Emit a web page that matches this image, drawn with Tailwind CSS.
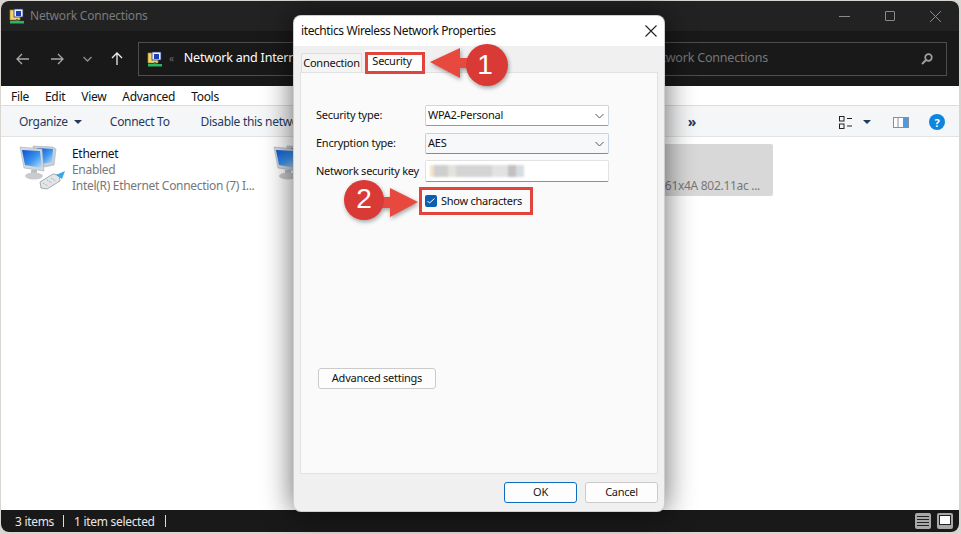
<!DOCTYPE html>
<html><head><meta charset="utf-8"><script src="https://cdn.jsdelivr.net/npm/@tailwindcss/browser@4"></script></head>
<body class="bg-[#d9d6d2] overflow-hidden">
<div class="relative w-[961px] h-[534px] overflow-hidden font-['Noto_Sans',sans-serif] text-[12px] tracking-[-0.3px] text-[#1a1a1a]">
  <svg width="0" height="0" class="absolute"><defs>
    <linearGradient id="scr" x1="0" y1="0" x2="1" y2="1"><stop offset="0" stop-color="#0d4fd0"/><stop offset=".55" stop-color="#3d96ee"/><stop offset="1" stop-color="#bfe3fb"/></linearGradient>
    <g id="folder"><path d="M1 2h6l1 1h3v9H1z" fill="#f2d46a" stroke="#a98b2c" stroke-width=".7"/><rect x="5" y="1" width="9" height="8" fill="#eef3fb" stroke="#24357f" stroke-width=".8"/><rect x="7" y="3" width="5" height="5" fill="#1f3fb5"/><rect x="7" y="11" width="2" height="2.5" fill="#3a7a4a"/><rect x="1" y="13" width="14" height="2.5" fill="#29b765"/></g>
    <g id="net"><path d="M14 2l20 1 3 2-2 16-10 2-9-8z" fill="#c9d0d6" stroke="#9aa2a8" stroke-width=".5"/><path d="M18 4l16 1-1 13-10 2z" fill="url(#scr)"/><path d="M1 3l22 2 2 22-20-3z" fill="#d3d8dc" stroke="#9aa2a8" stroke-width=".5"/><path d="M3 6l18 1 2 17-17-3z" fill="url(#scr)"/><rect x="12" y="26" width="6" height="4" fill="#b9bec3"/><ellipse cx="15" cy="32" rx="9" ry="3.5" fill="#c8ccd0"/></g>
    <g id="plug"><path d="M21 38l13-8 6 1 1 6-13 8-6-1z" fill="#e2e6e9" stroke="#828a8f" stroke-width=".7"/><path d="M24 39l5 3M28 36l5 3M32 34l5 3" stroke="#7c8488" stroke-width=".7" fill="none" stroke-dasharray="1 1"/><path d="M37 31l9-4-3 8z" fill="#35a9e8"/></g>
  </defs></svg>

  <div class="ml-px mt-px w-[958px] h-[531px] rounded-lg overflow-hidden flex flex-col bg-white">
    <div class="h-[30px] shrink-0 bg-[#222222] flex items-center pl-[8px] pr-[18px] text-[#7b7b7b]">
      <svg width="16" height="16" viewBox="0 0 16 16"><use href="#folder"/></svg>
      <span class="ml-[5px] tracking-[-0.2px]">Network Connections</span>
      <div class="ml-auto flex items-center gap-[35px]">
        <div class="w-[11px] h-px bg-[#8a8a8a]"></div>
        <div class="w-[10px] h-[10px] border border-[#8a8a8a] rounded-[1px]"></div>
        <svg width="11" height="11" viewBox="0 0 11 11" stroke="#8a8a8a"><path d="M0 0l11 11M11 0L0 11"/></svg>
      </div>
    </div>
    <div class="h-[55px] shrink-0 bg-[#191919] flex items-center pl-[15px] pr-[12px]">
      <svg width="13" height="12" viewBox="0 0 13 12" fill="none" stroke="#a8a8a8" stroke-width="1.3"><path d="M13 6H1M6 1L1 6l5 5"/></svg>
      <svg class="ml-[22px]" width="13" height="12" viewBox="0 0 13 12" fill="none" stroke="#a8a8a8" stroke-width="1.3"><path d="M0 6h12M7 1l5 5-5 5"/></svg>
      <svg class="ml-[19px]" width="9" height="6" viewBox="0 0 9 6" fill="none" stroke="#8a8a8a" stroke-width="1.5"><path d="M.5 1l4 4 4-4"/></svg>
      <svg class="ml-[19px]" width="12" height="13" viewBox="0 0 12 13" fill="none" stroke="#eeeeee" stroke-width="1.3"><path d="M6 13V1M1 6l5-5 5 5"/></svg>
      <div class="ml-[15px] flex-1 h-[34px] border border-[#4e4e4e] flex items-center pl-[8px] pr-[13px]">
        <svg width="16" height="16" viewBox="0 0 16 16"><use href="#folder"/></svg>
        <span class="ml-[6px] text-[#666] text-[10px]">«</span>
        <span class="ml-[10px] text-white text-[12.5px] tracking-[-0.2px]">Network and Internet</span>
        <span class="ml-auto mr-[153px] text-[#777] text-[12.5px] tracking-[-0.2px]">Search Network Connections</span>
        <svg width="12" height="12" viewBox="0 0 12 12" fill="none" stroke="#a0a0a0" stroke-width="1.7"><circle cx="7.5" cy="4.5" r="3.3"/><path d="M5 7l-4 4" stroke-width="2"/></svg>
      </div>
    </div>
    <div class="h-[20px] shrink-0 bg-white flex items-center pl-[10px] pt-[2px] border-b border-[#dcdcdc] text-[#111]">
      <span>File</span><span class="ml-[16px]">Edit</span><span class="ml-[16px]">View</span><span class="ml-[16px]">Advanced</span><span class="ml-[16px]">Tools</span>
    </div>
    <div class="h-[31px] shrink-0 bg-[#f5f6f7] border-b border-[#e3e3e3] flex items-center pl-[18px] pr-[14px] pt-[2px] text-[#1e3a5f]">
      <span>Organize</span>
      <svg class="ml-[6px]" width="8" height="4" viewBox="0 0 8 4"><path d="M0 0h8L4 4z" fill="#1e3a5f"/></svg>
      <span class="ml-[28px]">Connect To</span>
      <span class="ml-[31px]">Disable this network device</span>
      <span class="ml-auto mr-[143px] text-[14px] font-bold text-[#1e3a5f] leading-none">»</span>
      <svg width="13" height="13" viewBox="0 0 13 13" fill="none" stroke="#222"><rect x=".5" y=".5" width="4.5" height="4.5"/><rect x=".5" y="8" width="4.5" height="4.5"/><path d="M8 2.5h5M8 10h5"/></svg>
      <svg class="ml-[11px]" width="8" height="4" viewBox="0 0 8 4"><path d="M0 0h8L4 4z" fill="#1e3a5f"/></svg>
      <svg class="ml-[22px]" width="16" height="11" viewBox="0 0 16 11"><rect x=".5" y=".5" width="15" height="10" fill="#fff" stroke="#8a8f94"/><rect x="10" y="1" width="5" height="9" fill="#4b9be2"/><path d="M5 1v9" stroke="#8a8f94"/></svg>
      <div class="ml-[20px] w-[16px] h-[16px] rounded-full bg-[#0f85dc] flex items-center justify-center text-white font-bold text-[11px] leading-none">?</div>
    </div>
    <div class="flex-1 bg-white flex items-start pt-[7px]">
      <div class="w-[253px] flex pl-[18px] shrink-0">
        <svg width="46" height="46" viewBox="0 0 46 46" class="shrink-0"><use href="#net"/><use href="#plug"/></svg>
        <div class="ml-[7px] leading-[16px] pt-[2px] whitespace-nowrap">
          <div class="text-[#111]">Ethernet</div><div class="text-[#777]">Enabled</div><div class="text-[#777]">Intel(R) Ethernet Connection (7) I...</div>
        </div>
      </div>
      <svg width="46" height="46" viewBox="0 0 46 46" class="shrink-0 ml-[19px]"><use href="#net"/></svg>
      <div class="ml-[274px] w-[180px] h-[52px] rounded-r-[2px] bg-[#d8d8d8] flex items-end justify-end pb-[2px] pr-[13px] text-[#777] whitespace-nowrap leading-[16px]">Qualcomm QCA61x4A 802.11ac ...</div>
    </div>
    <div class="h-[22px] shrink-0 bg-[#191919] text-[#e8e8e8] flex items-center pl-[14px] pr-[6px]">
      <span class="pt-[2px]">3 items</span><div class="ml-[9px] w-px h-[12px] bg-[#ddd]"></div>
      <span class="ml-[10px] pt-[2px]">1 item selected</span><div class="ml-[10px] w-px h-[12px] bg-[#ddd]"></div>
      <div class="ml-auto flex items-center gap-[6px]">
        <div class="w-[16px] h-[16px] rounded-[2px] bg-[#a9a9a9] flex flex-col justify-center gap-[2px] px-[2px]"><div class="h-px bg-[#222]"></div><div class="h-px bg-[#222]"></div><div class="h-px bg-[#222]"></div><div class="h-px bg-[#222]"></div></div>
        <div class="w-[16px] h-[16px] rounded-[2px] bg-[#a9a9a9] p-[2px] pb-[4px]"><div class="w-full h-full bg-white border border-[#222]"></div></div>
      </div>
    </div>
  </div>

  <!-- dialog -->
  <div class="absolute left-[293px] top-[15px] w-[372px] h-[497px] rounded-lg overflow-hidden bg-[#f0f0f0] shadow-[0_0_30px_rgba(0,0,0,0.6)] border border-[#9a9a9a]/40 flex flex-col text-[11px] tracking-[-0.25px] whitespace-nowrap">
    <div class="h-[30px] shrink-0 bg-white flex items-center pl-[7px] pr-[7px] text-[12px] tracking-[-0.4px] text-[#111]">
      <span>itechtics Wireless Network Properties</span>
      <svg class="ml-auto" width="12" height="12" viewBox="0 0 12 12" stroke="#222" stroke-width="1.1"><path d="M.5.5l11 11M11.5.5l-11 11"/></svg>
    </div>
    <div class="h-[26px] shrink-0 flex items-end pl-[7px]">
      <div class="w-[61px] h-[19px] bg-[#f4f4f4] border border-b-0 border-[#dcdcdc] rounded-t-[2px] flex items-center justify-center pt-[1px] text-[#111]">Connection</div>
      <div class="w-[60px] h-[22px] ml-[3px] bg-white flex items-center justify-center pr-[6px] text-[#111]">Security</div>
    </div>
    <div class="ml-[6px] w-[358px] h-[402px] shrink-0 bg-[#fafafa] border border-[#e2e2e2] pl-[15px] pt-[32px] pb-[84px] flex flex-col text-[#111]">
      <div class="flex items-center h-[21px]"><span class="w-[109px]">Security type:</span><div class="w-[184px] h-full bg-white border border-[#cdd6df] border-b-[#8f9aa5] rounded-[2px] flex items-center justify-between pl-[2px] pr-[4px]"><span>WPA2-Personal</span><svg width="9" height="6" viewBox="0 0 9 6" fill="none" stroke="#555"><path d="M.5 1l4 4 4-4"/></svg></div></div>
      <div class="flex items-center h-[21px] mt-[7px]"><span class="w-[109px]">Encryption type:</span><div class="w-[184px] h-full bg-[#f6f8fa] border border-[#c5d3e0] border-b-[#6f8fb0] rounded-[2px] flex items-center justify-between pl-[2px] pr-[4px]"><span>AES</span><svg width="9" height="6" viewBox="0 0 9 6" fill="none" stroke="#555"><path d="M.5 1l4 4 4-4"/></svg></div></div>
      <div class="flex items-center h-[22px] mt-[6px]"><span class="w-[109px]">Network security key</span><div class="w-[184px] h-full bg-white border border-[#e2e2e2] border-b-[#8f8f8f] rounded-[2px] flex items-center pl-[4px]"><div class="flex h-[12px] w-[100px] blur-[1px]"><div class="w-[4px] bg-[#f3e3c8]"></div><div class="w-[14px] bg-[#cfcfcf]"></div><div class="w-[8px] bg-[#e3e2dc]"></div><div class="w-[36px] bg-[#d4d4d4]"></div><div class="w-[16px] bg-[#e2e2e2]"></div><div class="w-[8px] bg-[#c4c0c0]"></div><div class="w-[8px] bg-[#d6dde0]"></div></div></div></div>
      <div class="flex items-center h-[12px] mt-[13px] ml-[109px]"><div class="w-[12px] h-[12px] rounded-[2px] bg-[#0a5fb4] flex items-center justify-center"><svg width="8" height="6" viewBox="0 0 8 6" fill="none" stroke="#fff"><path d="M.5 3l2 2 5-4.5"/></svg></div><span class="ml-[4px]">Show characters</span></div>
      <div class="mt-auto ml-[2px] w-[118px] h-[21px] bg-[#fdfdfd] border border-[#cbcbcb] rounded-[3px] flex items-center justify-center">Advanced settings</div>
    </div>
    <div class="flex-1 flex items-start justify-end gap-[8px] pt-[8px] pr-[6px]">
      <div class="w-[73px] h-[21px] bg-[#fdfdfd] border border-[#0f6cbd] rounded-[3px] flex items-center justify-center">OK</div>
      <div class="w-[73px] h-[21px] bg-[#fdfdfd] border border-[#cbcbcb] rounded-[3px] flex items-center justify-center">Cancel</div>
    </div>
  </div>

  <!-- annotations -->
  <div class="absolute left-[365px] top-[52px] w-[60px] h-[22px] border-[3px] border-[#e0443c]"></div>
  <div class="absolute left-[419px] top-[187px] w-[114px] h-[28px] border-[3px] border-[#e0443c]"></div>
  <svg class="absolute left-0 top-0 drop-shadow-[1px_2px_2px_rgba(0,0,0,0.35)]" width="961" height="534" viewBox="0 0 961 534">
    <path d="M430 62l30-14v10h22v10h-22v10z" fill="#e8493f"/>
    <path d="M382 197h8v-9l28 14-28 15v-9h-8z" fill="#e8493f"/>
    <circle cx="487" cy="65" r="21" fill="#d93a36"/>
    <circle cx="364" cy="200" r="20" fill="#d93a36"/>
  </svg>
  <div class="absolute left-[464px] top-[44px] w-[42px] h-[42px] flex items-center justify-center text-white text-[28px] leading-none font-['Liberation_Sans',sans-serif]">1</div>
  <div class="absolute left-[344px] top-[179px] w-[40px] h-[40px] flex items-center justify-center text-white text-[28px] leading-none font-['Liberation_Sans',sans-serif]">2</div>
</div>
</body></html>
